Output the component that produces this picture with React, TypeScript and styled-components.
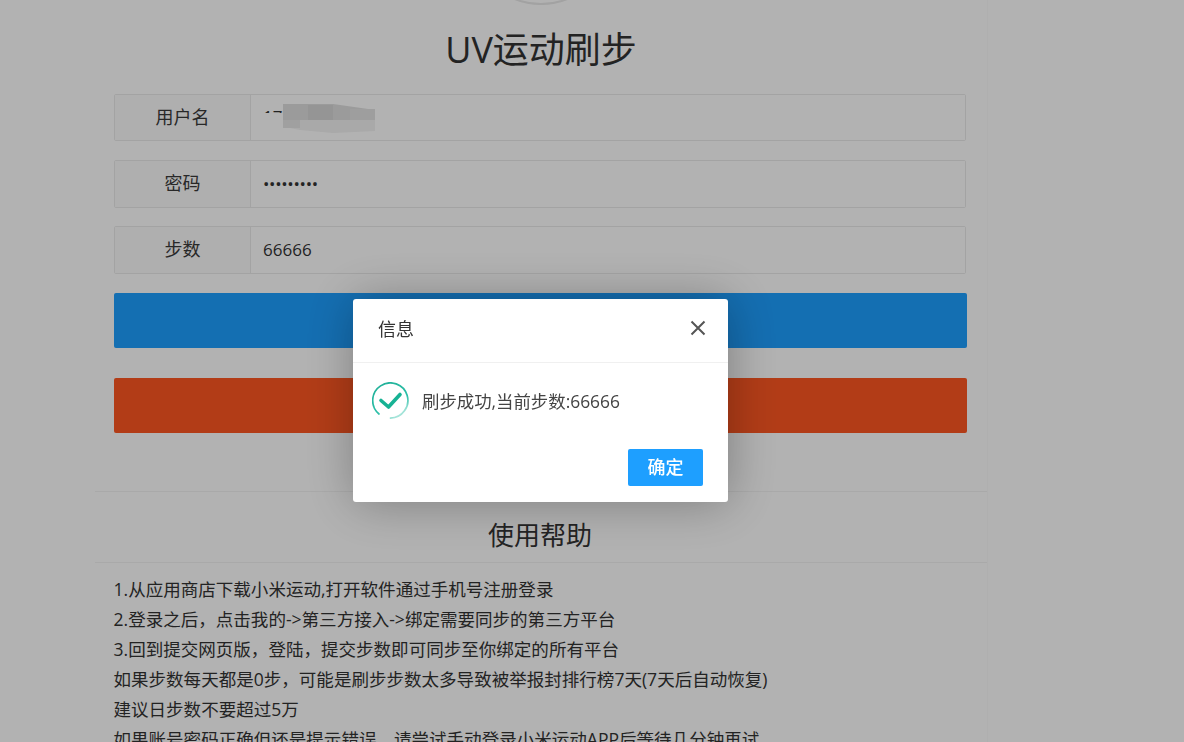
import React from "react";
import styled, { createGlobalStyle } from "styled-components";

const FONT = `"Open Sans", "Noto Sans CJK SC", sans-serif`;

const Global = createGlobalStyle`
  html, body { margin: 0; padding: 0; height: 100%; overflow: hidden; background: #fff; }
  * { box-sizing: border-box; }
  body { font-family: ${FONT}; color: #333; }
`;

const Page = styled.div`
  width: 1082px;
  height: 742px;
  overflow: hidden;
`;

const Container = styled.main`
  width: 893px;
  margin-left: 95px;
  height: 742px;
  border-right: 1px solid #fbfbfb;
  display: flex;
  flex-direction: column;
`;

const Avatar = styled.div`
  width: 140px;
  height: 140px;
  margin: -135px auto 0;
  border-radius: 50%;
  border: 2px solid #e8e8e8;
  background: #fff;
  flex: none;
`;

const Title = styled.h1`
  margin: 18px 0 0;
  height: 54px;
  font-size: 36px;
  line-height: 54px;
  font-weight: 400;
  text-align: center;
  color: #333;
`;

const Form = styled.form`
  padding: 17px 19px 0;
  display: flex;
  flex-direction: column;
`;

const Field = styled.div<{ $height: number; $gap: number }>`
  position: relative;
  display: flex;
  width: 852px;
  height: ${(p) => p.$height}px;
  margin-bottom: ${(p) => p.$gap}px;
  border: 1px solid #eaeaea;
  border-radius: 2px;
`;

const FieldLabel = styled.label`
  flex: none;
  width: 136px;
  padding-bottom: 4px;
  display: flex;
  align-items: center;
  justify-content: center;
  font-size: 18px;
  color: #3a3a3a;
  background: #fbfbfb;
  border-right: 1px solid #eaeaea;
`;

const Input = styled.input`
  flex: 1;
  min-width: 0;
  border: 0;
  outline: 0;
  padding: 0 12px 2px;
  background: #fff;
  font-family: ${FONT};
  font-size: 17px;
  color: #333;
`;

const PasswordInput = styled(Input)`
  letter-spacing: -0.3px;
`;

const Mosaic = styled.svg`
  position: absolute;
  left: 143px;
  top: 8px;
  width: 120px;
  height: 32px;
  pointer-events: none;
`;

const ActionButton = styled.button<{ $tone: string; $gap: number }>`
  width: 853px;
  height: 55px;
  margin-bottom: ${(p) => p.$gap}px;
  border: 0;
  border-radius: 2px;
  background: ${(p) => p.$tone};
  color: #fff;
  font-family: ${FONT};
  font-size: 18px;
`;

const Help = styled.section`
  display: flex;
  flex-direction: column;
`;

const HelpHeading = styled.h2`
  margin: 0;
  height: 72px;
  padding-right: 2px;
  border-top: 1px solid #f3f3f3;
  border-bottom: 1px solid #f3f3f3;
  font-size: 26px;
  line-height: 86px;
  font-weight: 400;
  text-align: center;
  color: #333;
`;

const HelpList = styled.div`
  padding: 11px 18px 0 18.5px;
`;

const HelpLine = styled.p`
  margin: 0;
  font-size: 17.55px;
  line-height: 30px;
  white-space: nowrap;
  color: #333;
`;

const Overlay = styled.div`
  position: fixed;
  inset: 0;
  background: rgba(0, 0, 0, 0.3);
`;

const Modal = styled.div`
  position: fixed;
  left: 353px;
  top: 299px;
  width: 375px;
  height: 203px;
  display: flex;
  flex-direction: column;
  background: #fff;
  border-radius: 3px;
  box-shadow: 1px 1px 50px rgba(0, 0, 0, 0.3);
`;

const ModalHeader = styled.header`
  flex: none;
  height: 64px;
  padding: 0 22px 5px 25px;
  display: flex;
  align-items: center;
  justify-content: space-between;
  border-bottom: 1px solid #f0f0f0;
  font-size: 18px;
  color: #333;
`;

const CloseIcon = styled.svg`
  width: 16px;
  height: 16px;
  display: block;
`;

const ModalBody = styled.div`
  flex: none;
  height: 76px;
  padding: 0 18px 1px 19px;
  display: flex;
  align-items: center;
  gap: 13px;
  font-size: 17.4px;
  color: #444;
`;

const StatusIcon = styled.svg`
  width: 37px;
  height: 37px;
  flex: none;
`;

const ModalFooter = styled.footer`
  flex: none;
  padding: 10px 25px 0;
  display: flex;
  justify-content: flex-end;
`;

const ConfirmButton = styled.button`
  width: 75px;
  height: 37px;
  border: 0;
  border-radius: 2px;
  background: #1e9fff;
  color: #fff;
  font-family: ${FONT};
  font-size: 18px;
  font-weight: 500;
  padding: 0 0 3px;
`;

const HELP = [
  "1.从应用商店下载小米运动,打开软件通过手机号注册登录",
  "2.登录之后，点击我的->第三方接入->绑定需要同步的第三方平台",
  "3.回到提交网页版，登陆，提交步数即可同步至你绑定的所有平台",
  "如果步数每天都是0步，可能是刷步步数太多导致被举报封排行榜7天(7天后自动恢复)",
  "建议日步数不要超过5万",
  "如果账号密码正确但还是提示错误，请尝试手动登录小米运动APP后等待几分钟再试",
];

export default function App() {
  return (
    <>
      <Global />
      <Page>
        <Container>
          <Avatar />
          <Title>UV运动刷步</Title>
          <Form onSubmit={(e) => e.preventDefault()}>
            <Field $height={47} $gap={19}>
              <FieldLabel>用户名</FieldLabel>
              <Input readOnly defaultValue="17" />
              <Mosaic viewBox="0 0 120 32">
                <rect x="0" y="10" width="27" height="16" fill="#fff" />
                <polygon points="25,1 75,1 117,7 117,17 25,17" fill="#dedede" />
                <rect x="50" y="2" width="25" height="15" fill="#d6d6d6" />
                <rect x="92" y="6" width="25" height="11" fill="#e2e2e2" />
                <polygon points="25,17 117,17 117,28 75,30 42,27 27,24" fill="#f2f2f2" />
                <rect x="25" y="17" width="17" height="8" fill="#e6e6e6" />
              </Mosaic>
            </Field>
            <Field $height={48} $gap={18}>
              <FieldLabel>密码</FieldLabel>
              <PasswordInput readOnly type="password" defaultValue="123456789" />
            </Field>
            <Field $height={48} $gap={19}>
              <FieldLabel>步数</FieldLabel>
              <Input readOnly defaultValue="66666" />
            </Field>
            <ActionButton type="button" $tone="#1e9fff" $gap={30}>提交</ActionButton>
            <ActionButton type="button" $tone="#ff5722" $gap={58}>重置</ActionButton>
          </Form>
          <Help>
            <HelpHeading>使用帮助</HelpHeading>
            <HelpList>
              {HELP.map((line) => (
                <HelpLine key={line}>{line}</HelpLine>
              ))}
            </HelpList>
          </Help>
        </Container>
      </Page>
      <Overlay />
      <Modal role="dialog">
        <ModalHeader>
          <span>信息</span>
          <CloseIcon viewBox="0 0 16 16" fill="none" stroke="#555" strokeWidth="2">
            <path d="M1.5 1.5 14.5 14.5M14.5 1.5 1.5 14.5" />
          </CloseIcon>
        </ModalHeader>
        <ModalBody>
          <StatusIcon viewBox="0 0 37 37" fill="none">
            <defs>
              <linearGradient id="ring" x1="0" y1="0" x2="0.6" y2="1">
                <stop offset="0" stopColor="#1fae96" />
                <stop offset="0.7" stopColor="#2cbfa8" />
                <stop offset="1" stopColor="#a5e4d9" />
              </linearGradient>
            </defs>
            <path
              d="M7 32A17.6 17.6 0 1 1 18.5 36.1"
              stroke="url(#ring)"
              strokeWidth="1.7"
              strokeLinecap="round"
            />
            <path
              d="M9 18.5 16.5 25 28 12.5"
              stroke="#17b294"
              strokeWidth="3.6"
              strokeLinecap="round"
              strokeLinejoin="round"
            />
          </StatusIcon>
          <span>刷步成功,当前步数:66666</span>
        </ModalBody>
        <ModalFooter>
          <ConfirmButton type="button">确定</ConfirmButton>
        </ModalFooter>
      </Modal>
    </>
  );
}
